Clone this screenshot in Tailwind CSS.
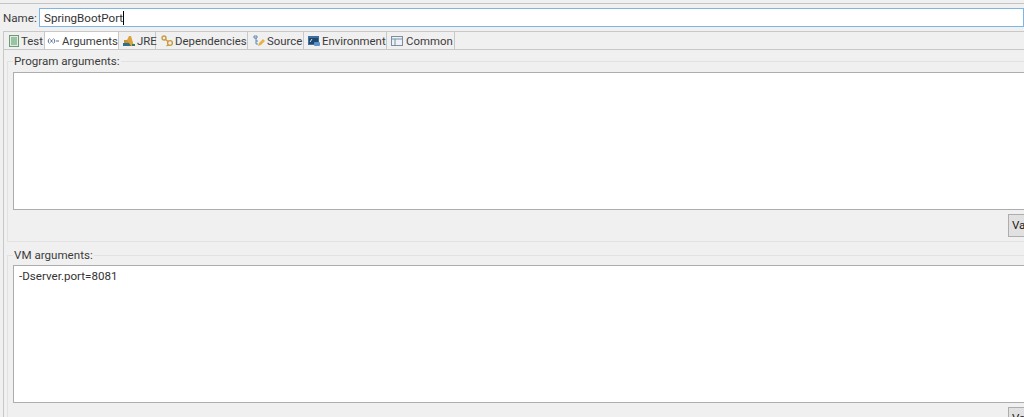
<!DOCTYPE html>
<html lang="en">
  <head>
    <meta charset="UTF-8" />
    <script src="https://cdn.jsdelivr.net/npm/@tailwindcss/browser@4"></script>
    <title>Run Configuration</title>
  </head>
  <body class="bg-[#f0f0f0]">
    <div class="h-[417px] w-[1024px] overflow-hidden bg-[#f0f0f0] font-['Roboto',sans-serif] text-[11.6px] leading-[16px] text-[#3c3c3c]">
      <div class="h-[4px] border-b border-[#c4c4c4]"></div>
      <div class="flex h-[23px] items-start pt-[4px]">
        <label class="ml-[3px] w-[36px] shrink-0 pt-[2px]">Name:</label>
        <div class="h-[19px] w-[1000px] border border-[#7db5e4] bg-white pl-[4px] pt-[1px] text-[#333]">SpringBootPort<span class="border-l border-black"></span></div>
      </div>
      <!-- tabs -->
      <div class="ml-[3px] mt-[4px] flex h-[19px] w-[1021px] border-y border-[#c8c8c8] text-[11.4px]">
        <div class="flex w-[42px] items-center border-x border-[#c8c8c8] pl-[4px]">
          <svg class="mr-[1px] h-[12px] w-[12px] shrink-0" viewBox="0 0 12 12"><rect x="1.5" y="0.5" width="9" height="11" fill="#dfeee0" stroke="#6f9a78"/><path d="M3 3h6M3 5h6M3 7h6M3 9h6" stroke="#4f9a68"/></svg>
          <span>Test</span>
        </div>
        <div class="flex w-[73px] items-center bg-white pl-[2px]">
          <svg class="mr-[3px] h-[12px] w-[12px] shrink-0" viewBox="0 0 12 12" fill="none" stroke="#5a6f96"><path d="M2.5 3.5C.8 5 .8 7 2.5 8.5M6.5 3.5C8.2 5 8.2 7 6.5 8.5M3.5 4.5l2 3M5.5 4.5l-2 3"/><path d="M9 6h3"/></svg>
          <span>Arguments</span>
        </div>
        <div class="flex w-[38px] items-center border-x border-[#c8c8c8] pl-[4px]">
          <svg class="mr-[2px] h-[12px] w-[12px] shrink-0" viewBox="0 0 12 12"><rect x="0" y="8" width="9" height="3" fill="#2d6f8f"/><rect x="1" y="5" width="7" height="3" fill="#c9902c"/><path d="M4 5L6 1h2l3 10H8z" fill="#d9a33a"/><rect x="9" y="9" width="3" height="2" fill="#3c7a55"/></svg>
          <span>JRE</span>
        </div>
        <div class="flex w-[92px] items-center border-r border-[#c8c8c8] pl-[5px]">
          <svg class="mr-[2px] h-[12px] w-[12px] shrink-0" viewBox="0 0 12 12" fill="none" stroke="#c99a3c" stroke-width="1.4"><circle cx="3" cy="3" r="2"/><circle cx="9" cy="8" r="2.4"/><path d="M4.5 4.5L7 6.5M7 10l-1.5 1"/></svg>
          <span>Dependencies</span>
        </div>
        <div class="flex w-[56px] items-center border-r border-[#c8c8c8] pl-[5px]">
          <svg class="mr-[2px] h-[12px] w-[12px] shrink-0" viewBox="0 0 12 12" fill="none"><path d="M1 1h3v2H1zM3 3v6h2M3 6h2" stroke="#5a86b0"/><path d="M5 11l1-3 4-4 2 2-4 4z" fill="#e8b04a"/></svg>
          <span>Source</span>
        </div>
        <div class="flex w-[83px] items-center border-r border-[#c8c8c8] pl-[4px]">
          <svg class="mr-[2px] h-[12px] w-[12px] shrink-0" viewBox="0 0 12 12"><rect x="0" y="1" width="11" height="9" fill="#3f6fa0"/><rect x="1" y="3" width="9" height="6" fill="#20486e"/><path d="M2 7l2-3" stroke="#cfe0ef"/><rect x="6" y="7" width="6" height="4" rx="1" fill="#5b93c7"/></svg>
          <span>Environment</span>
        </div>
        <div class="flex w-[68px] items-center border-r border-[#c8c8c8] pl-[4px]">
          <svg class="mr-[3px] h-[12px] w-[12px] shrink-0" viewBox="0 0 12 12" fill="#eef2f7" stroke="#7d8ea3"><rect x="0.5" y="1.5" width="11" height="9"/><path d="M0.5 4h11M4 4v6.5" fill="none"/></svg>
          <span>Common</span>
        </div>
      </div>
      <!-- tab body -->
      <div class="ml-[3px] h-[400px] border-l border-[#c8c8c8] pl-[3px] pt-[3px]">
        <fieldset class="h-[189px] w-[1030px] border border-[#e2e2e2] pl-[5px]">
          <legend class="px-[1px]">Program arguments:</legend>
          <div class="mt-[3px] h-[138px] w-[1030px] border-[1.5px] border-[#adadad] bg-white"></div>
          <div class="mt-[4px] flex w-[1011px] justify-end overflow-hidden">
            <div class="h-[23px] w-[16px] overflow-hidden whitespace-nowrap border border-r-0 border-[#adadad] bg-[#e1e1e1] pl-[3px] pt-[2px] text-[#222]">Variables...</div>
          </div>
        </fieldset>
        <fieldset class="mt-[5px] h-[190px] w-[1030px] border border-[#e2e2e2] pl-[5px]">
          <legend class="px-[1px]">VM arguments:</legend>
          <div class="mt-[2px] h-[138px] w-[1030px] border-[1.5px] border-[#adadad] bg-white px-[5px] pt-[2px] text-[#333]">-Dserver.port=8081</div>
          <div class="mt-[4px] flex w-[1011px] justify-end overflow-hidden">
            <div class="h-[23px] w-[16px] overflow-hidden whitespace-nowrap border border-r-0 border-[#adadad] bg-[#e1e1e1] pl-[3px] pt-[2px] text-[#222]">Variables...</div>
          </div>
        </fieldset>
      </div>
    </div>
  </body>
</html>
